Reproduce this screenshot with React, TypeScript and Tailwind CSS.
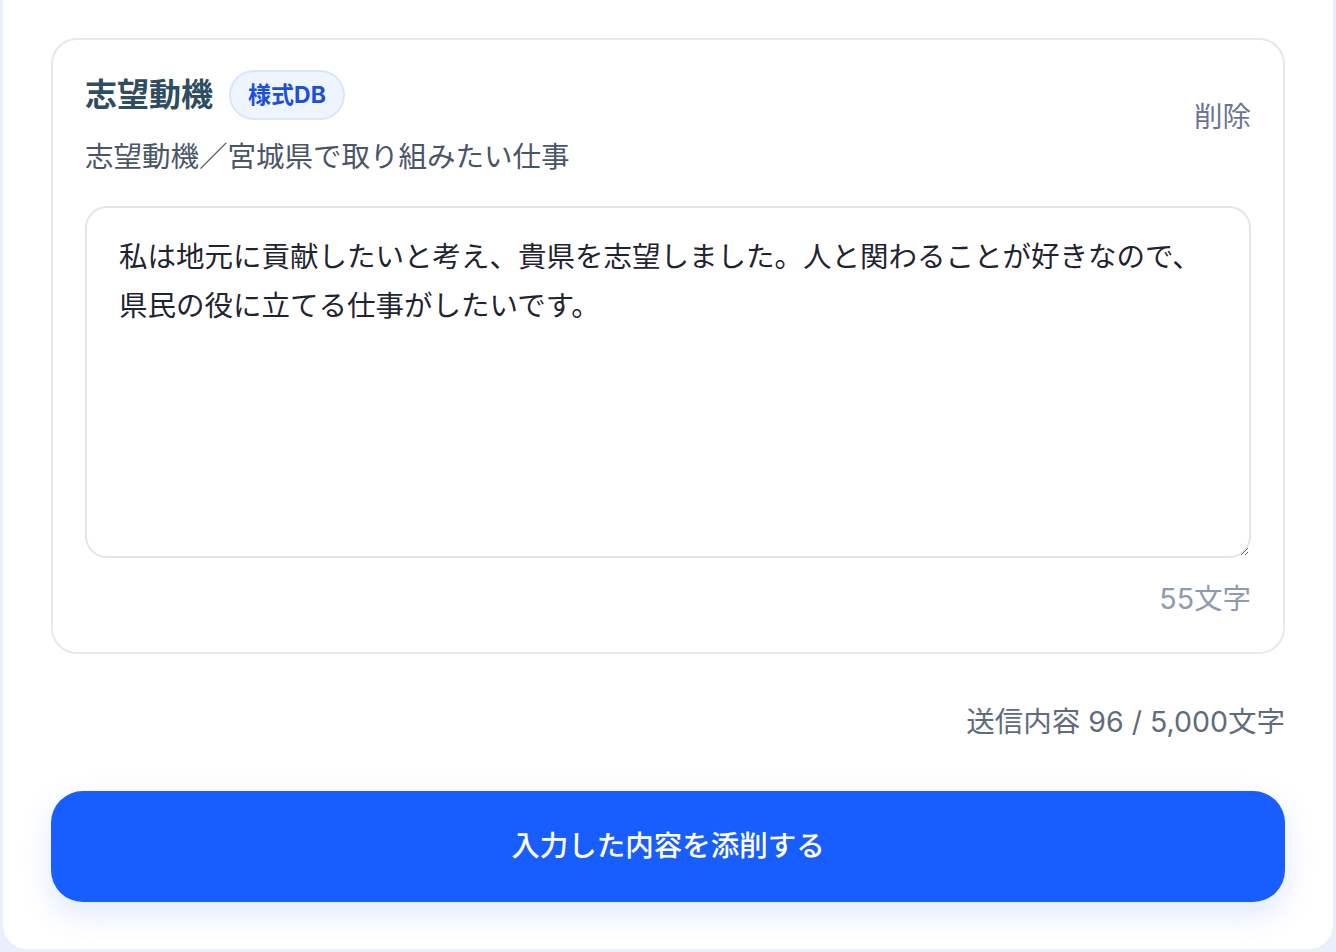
import { useState } from "react";

const FONT = 'Inter, "Noto Sans CJK JP", sans-serif';

const TEXTO_INICIAL =
  "私は地元に貢献したいと考え、貴県を志望しました。人と関わることが好きなので、県民の役に立てる仕事がしたいです。";

export default function App() {
  const [texto, setTexto] = useState(TEXTO_INICIAL);
  const total = 96 - TEXTO_INICIAL.length + texto.length;

  return (
    <div className="min-h-screen bg-[#e9effb] px-[3px] pb-[3px]" style={{ fontFamily: FONT }}>
      <div className="rounded-b-[24px] bg-white px-12 pb-[47px] pt-[38px]">
        <SectionCard texto={texto} onChange={setTexto} />

        <p className="mt-[47px] text-right text-[28.5px] leading-[42px] text-[#606b7e]">
          送信内容 {total} / 5,000文字
        </p>

        <button
          type="button"
          className="mt-12 flex h-[111px] w-full items-center justify-center rounded-[32px] bg-[#185dfe] text-[28.5px] font-medium text-white shadow-[0_12px_32px_rgba(24,93,254,0.14)]"
        >
          入力した内容を添削する
        </button>
      </div>
    </div>
  );
}

function SectionCard({
  texto,
  onChange,
}: {
  texto: string;
  onChange: (v: string) => void;
}) {
  return (
    <section className="rounded-[26px] border-2 border-[#e6e8ec] px-8 pb-8 pt-[30px]">
      <div className="flex items-start justify-between">
        <div>
          <div className="flex items-center gap-4">
            <h2 className="text-[32px] font-bold leading-[50px] text-[#2f4d61]">志望動機</h2>
            <span className="flex h-[50px] items-center rounded-full border-2 border-[#dbe6f8] bg-[#eff5fe] px-[17px] text-[23px] font-bold text-[#1d4fd8]">
              様式DB
            </span>
          </div>
          <p className="mt-[16px] text-[28.5px] leading-[42px] text-[#4a5568]">
            志望動機／宮城県で取り組みたい仕事
          </p>
        </div>
        <button type="button" className="mt-[26px] text-[28.5px] leading-[42px] text-[#6b7592]">
          削除
        </button>
      </div>

      <textarea
        value={texto}
        onChange={(e) => onChange(e.target.value)}
        className="mt-[28px] block h-[352px] w-full rounded-[22px] border-2 border-[#e3e5e9] pb-6 pl-8 pr-10 pt-6 text-[28.5px] leading-[1.72] text-[#1f2430] outline-none"
        style={{ fontFamily: FONT }}
      />

      <p className="mt-5 text-right text-[28.5px] leading-[42px] text-[#8e9ab0]">
        {texto.length}文字
      </p>
    </section>
  );
}
